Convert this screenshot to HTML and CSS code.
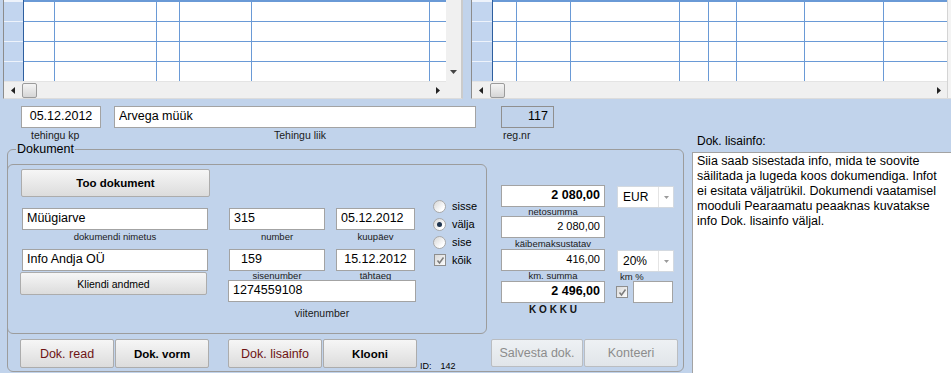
FILE: index.html
```html
<!DOCTYPE html>
<html lang="et">
<head>
    <meta charset="UTF-8">
    <meta name="viewport" content="width=device-width, initial-scale=1.0">
    <title>Dokument</title>
    <link rel="stylesheet" href="styles.css">
</head>
<body>
    <div class="grids">
        <div class="grid grid-left">
            <div class="grid-main">
                <div class="cells cols-left">
                    <div class="head"></div><div></div><div></div><div></div><div></div><div></div><div class="last"></div>
                </div>
                <div class="hscroll">
                    <span class="arrow"><svg width="4" height="7" viewBox="0 0 4 7"><path d="M4 0L0 3.5L4 7Z"/></svg></span>
                    <span class="thumb"></span>
                    <span class="arrow arrow-end"><svg width="4" height="7" viewBox="0 0 4 7"><path d="M0 0L4 3.5L0 7Z"/></svg></span>
                </div>
            </div>
            <div class="vscroll">
                <span class="arrow"><svg width="7" height="4" viewBox="0 0 7 4"><path d="M0 0H7L3.5 4Z"/></svg></span>
            </div>
        </div>

        <div class="grid grid-right">
            <div class="grid-main">
                <div class="cells cols-right">
                    <div class="head"></div><div></div><div></div><div></div><div></div><div></div><div></div><div></div><div class="last"></div>
                </div>
                <div class="hscroll">
                    <span class="arrow"><svg width="4" height="7" viewBox="0 0 4 7"><path d="M4 0L0 3.5L4 7Z"/></svg></span>
                    <span class="thumb"></span>
                    <span class="arrow arrow-end"><svg width="4" height="7" viewBox="0 0 4 7"><path d="M0 0L4 3.5L0 7Z"/></svg></span>
                </div>
            </div>
            <div class="stub"></div>
        </div>
    </div>

    <div class="content">
        <div class="form">
            <div class="head-row">
                <div class="field f-date">
                    <input class="box center" value="05.12.2012">
                    <span class="lbl-top">tehingu kp</span>
                </div>
                <div class="field f-kind">
                    <input class="box" value="Arvega müük">
                    <span class="lbl-top center">Tehingu liik</span>
                </div>
                <div class="field f-reg">
                    <input class="box box-ro right" value="117">
                    <span class="lbl-top">reg.nr</span>
                </div>
            </div>

            <fieldset class="doc">
                <legend>Dokument</legend>
                <div class="doc-row">
                    <div class="doc-box">
                        <div class="col-a">
                            <button class="btn btn-bold btn-fetch">Too dokument</button>
                            <div class="field f-name">
                                <input class="box" value="Müügiarve">
                                <span class="lbl">dokumendi nimetus</span>
                            </div>
                            <input class="box f-client" value="Info Andja OÜ">
                            <button class="btn btn-client">Kliendi andmed</button>
                        </div>

                        <div class="col-b">
                            <div class="pair">
                                <div class="field f-num">
                                    <input class="box" value="315">
                                    <span class="lbl">number</span>
                                </div>
                                <div class="field f-day">
                                    <input class="box" value="05.12.2012">
                                    <span class="lbl">kuupäev</span>
                                </div>
                            </div>
                            <div class="pair">
                                <div class="field f-num">
                                    <input class="box pad-num" value="159">
                                    <span class="lbl lbl-tight">sisenumber</span>
                                </div>
                                <div class="field f-day">
                                    <input class="box center" value="15.12.2012">
                                    <span class="lbl lbl-tight">tähtaeg</span>
                                </div>
                            </div>
                            <div class="field f-ref">
                                <input class="box" value="1274559108">
                                <span class="lbl lbl-ref">viitenumber</span>
                            </div>
                        </div>

                        <div class="col-c">
                            <label class="opt"><span class="radio"></span>sisse</label>
                            <label class="opt"><span class="radio on"></span>välja</label>
                            <label class="opt"><span class="radio"></span>sise</label>
                            <label class="opt"><span class="check"><svg width="9" height="9" viewBox="0 0 9 9"><path d="M1.5 4.5L3.5 7L7.5 1.5" fill="none" stroke="#7c7c7c" stroke-width="1.5"/></svg></span>kõik</label>
                        </div>
                    </div>

                    <div class="amounts">
                        <div class="amt-row">
                            <div class="field f-amt">
                                <input class="box right bold" value="2 080,00">
                                <span class="lbl lbl-9">netosumma</span>
                            </div>
                            <div class="combo">
                                <span>EUR</span>
                                <span class="drop"><svg width="5" height="3" viewBox="0 0 5 3"><path d="M0 0H5L2.5 3Z"/></svg></span>
                            </div>
                        </div>
                        <div class="field f-amt">
                            <input class="box right small" value="2 080,00">
                            <span class="lbl lbl-11">käibemaksustatav</span>
                        </div>
                        <div class="amt-row">
                            <div class="field f-amt">
                                <input class="box right small" value="416,00">
                                <span class="lbl lbl-9">km. summa</span>
                            </div>
                            <div class="field f-combo">
                                <div class="combo">
                                    <span>20%</span>
                                    <span class="drop"><svg width="5" height="3" viewBox="0 0 5 3"><path d="M0 0H5L2.5 3Z"/></svg></span>
                                </div>
                                <span class="lbl lbl-9">km %</span>
                            </div>
                        </div>
                        <div class="amt-row total-row">
                            <input class="box right bold f-amt" value="2 496,00">
                            <span class="check check-total"><svg width="9" height="9" viewBox="0 0 9 9"><path d="M1.5 4.5L3.5 7L7.5 1.5" fill="none" stroke="#7c7c7c" stroke-width="1.5"/></svg></span>
                            <input class="box f-extra" value="">
                        </div>
                        <div class="lbl-total">K O K K U</div>
                    </div>
                </div>

                <div class="actions">
                    <button class="btn btn-act btn-red">Dok. read</button>
                    <button class="btn btn-act btn-bold gap-s">Dok. vorm</button>
                    <button class="btn btn-act btn-red gap-l">Dok. lisainfo</button>
                    <button class="btn btn-act btn-bold gap-s">Klooni</button>
                    <span class="id">ID:<span class="id-num">142</span></span>
                    <button class="btn btn-save" disabled>Salvesta dok.</button>
                    <button class="btn btn-post" disabled>Konteeri</button>
                </div>
            </fieldset>
        </div>

        <div class="info">
            <div class="info-label">Dok. lisainfo:</div>
            <div class="info-text">
                Siia saab sisestada info, mida te soovite<br>
                säilitada ja lugeda koos dokumendiga. Infot<br>
                ei esitata väljatrükil. Dokumendi vaatamisel<br>
                mooduli Pearaamatu peaaknas kuvatakse<br>
                info Dok. lisainfo väljal.
            </div>
        </div>
    </div>
</body>
</html>
```

FILE: styles.css
```css
* {
    box-sizing: border-box;
}

body {
    margin: 0;
    width: 951px;
    height: 373px;
    overflow: hidden;
    background: #c1d3eb;
    font-family: 'Liberation Sans', Arial, sans-serif;
    font-size: 12.5px;
    color: #000;
}

/* top grids */
.grids {
    display: flex;
    height: 99px;
}

.grid {
    display: flex;
    height: 99px;
    background: #f0f0f0;
    border-left: 1px solid #8c8c8c;
    border-bottom: 1px solid #dcdcdc;
}

.grid-left {
    margin-left: 3px;
    width: 460px;
    border-right: 2px solid #cbcbcb;
}

.grid-right {
    margin-left: 8px;
    width: 480px;
}

.grid-main {
    display: flex;
    flex-direction: column;
    flex: 1;
}

.cells {
    display: grid;
    height: 81px;
    background: repeating-linear-gradient(to bottom, #6a9ad6 0, #6a9ad6 1px, #fff 1px, #fff 20px);
    background-position: 0 1px;
}

.cols-left {
    grid-template-columns: 20px 31px 102px 23px 72px 178px 16px;
}

.cols-right {
    grid-template-columns: 21px 24px 54px 109px 29px 28px 68px 79px 63px;
}

.cells > div {
    border-right: 1px solid #6a9ad6;
}

.cells > .head {
    border-right-color: #2e5f9f;
    background: repeating-linear-gradient(to bottom, #eef3fb 0, #eef3fb 1px, #c2d5ef 1px, #c2d5ef 20px);
    background-position: 0 1px;
}

.cells > .last {
    border-right: 0;
}

.hscroll {
    display: flex;
    align-items: center;
    height: 17px;
    border-top: 1px solid #e4e4e4;
}

.arrow {
    display: flex;
    align-items: center;
    justify-content: center;
    width: 17px;
    height: 16px;
}

.arrow path {
    fill: #222;
}

.arrow-end {
    margin-left: auto;
}

.thumb {
    margin-left: 1px;
    width: 15px;
    height: 15px;
    border: 1px solid #9b9b9b;
    border-radius: 2px;
    background: linear-gradient(#f4f4f4, #d6d6d6);
}

.vscroll {
    display: flex;
    flex-direction: column;
    justify-content: flex-end;
    width: 15px;
    padding-bottom: 18px;
}

.vscroll .arrow {
    width: 15px;
}

.vscroll .arrow path {
    fill: #444;
}

.stub {
    width: 4px;
    border-left: 1px solid #d4d4d4;
    background: #f4f4f4;
}

/* form */
.content {
    display: flex;
    height: 274px;
}

.form {
    width: 692px;
    flex: none;
}

.field {
    display: flex;
    flex-direction: column;
}

.box {
    display: block;
    width: 100%;
    height: 22px;
    margin: 0;
    padding: 0 4px 2px;
    border: 1px solid #a3a3a3;
    background: #fff;
    font: inherit;
    color: #000;
    outline: none;
}

.box-ro {
    background: transparent;
    border-color: #8f8f8f;
    padding-right: 5px;
}

.center {
    text-align: center;
}

.right {
    text-align: right;
}

.bold {
    font-weight: bold;
}

.small {
    font-size: 11px;
}

.head-row {
    display: flex;
    padding-top: 7px;
}

.lbl-top {
    font-size: 10.5px;
    line-height: 14px;
    color: #1a1a1a;
}

.f-date {
    margin-left: 21px;
    width: 80px;
}

.f-date .lbl-top {
    padding-left: 10px;
}

.f-kind {
    margin-left: 13px;
    width: 362px;
}

.f-kind .lbl-top {
    padding-left: 10px;
}

.f-reg {
    margin-left: 25px;
    width: 53px;
}

.f-reg .lbl-top {
    padding-left: 2px;
}

/* Dokument group */
.doc {
    margin: 0 0 0 7px;
    width: 677px;
    min-width: 0;
    padding: 0 0 3px;
    border: 1px solid #9c9c9c;
    border-radius: 6px;
}

.doc legend {
    margin-left: 8px;
    padding: 0 1px;
    font-size: 12.5px;
    line-height: 14px;
}

.doc-row {
    display: flex;
    align-items: flex-start;
}

.doc-box {
    display: flex;
    align-items: flex-start;
    margin: 8px 0 0 -1px;
    width: 480px;
    height: 170px;
    border: 1px solid #9c9c9c;
    border-radius: 6px;
}

.btn {
    height: 28px;
    padding: 0;
    border: 1px solid #acacac;
    border-radius: 2px;
    background: linear-gradient(#f6f6f6, #dcdcdc);
    font-family: inherit;
    font-size: 12.5px;
    color: #000;
}

.btn-bold {
    font-weight: bold;
    font-size: 11.5px;
}

.btn-red {
    color: #6e1414;
}

.btn:disabled {
    color: #8c8c8c;
    background: linear-gradient(#eef1f4, #e1e5e9);
    border-color: #babdc1;
}

.lbl {
    font-size: 9.5px;
    line-height: 13px;
    text-align: center;
    color: #1a1a1a;
}

.lbl-tight {
    height: 9px;
    line-height: 9px;
    overflow: hidden;
}

.lbl-9 {
    line-height: 9px;
    height: 9px;
    overflow: hidden;
}

.lbl-11 {
    line-height: 11px;
}

.col-a {
    display: flex;
    flex-direction: column;
    margin: 4px 0 0 13px;
    width: 189px;
}

.btn-fetch {
    width: 189px;
}

.f-name {
    margin: 11px 0 0 1px;
    width: 186px;
}

.f-client {
    margin: 6px 0 0 1px;
    width: 186px;
}

.btn-client {
    margin: 1px 0 0 -1px;
    width: 187px;
    height: 23px;
    font-size: 10.5px;
}

.col-b {
    margin: 43px 0 0 18px;
    width: 188px;
}

.pair {
    display: flex;
}

.pair + .pair {
    margin-top: 6px;
}

.f-num {
    margin-left: 1px;
    width: 96px;
}

.f-day {
    margin-left: 11px;
    width: 79px;
}

.pad-num {
    padding-left: 11px;
}

.f-ref {
    width: 188px;
}

.lbl-ref {
    margin-top: 4px;
    font-size: 10.5px;
    line-height: 14px;
}

.col-c {
    margin: 32px 0 0 17px;
}

.opt {
    display: flex;
    align-items: center;
    gap: 6px;
    height: 18px;
    font-size: 11px;
}

.radio {
    display: flex;
    align-items: center;
    justify-content: center;
    width: 13px;
    height: 13px;
    border: 1px solid #a9a9a9;
    border-radius: 50%;
    background: linear-gradient(135deg, #d6d6d6, #fff 75%);
}

.radio.on::after {
    content: "";
    width: 5px;
    height: 5px;
    border-radius: 50%;
    background: #1f3550;
}

.check {
    display: flex;
    align-items: center;
    justify-content: center;
    margin-left: 1px;
    width: 12px;
    height: 12px;
    border: 1px solid #8e8e8e;
    background: linear-gradient(135deg, #d9d9d9, #fbfbfb);
}

/* amounts */
.amounts {
    margin: 29px 0 0 14px;
    width: 173px;
}

.amt-row {
    display: flex;
    align-items: flex-start;
}

.f-amt {
    width: 104px;
}

.combo {
    display: flex;
    margin: 1px 0 0 12px;
    width: 57px;
    height: 22px;
    border: 1px solid #d3d9e0;
    background: #fff;
    font-size: 12px;
    line-height: 20px;
}

.combo span:first-child {
    padding-left: 5px;
}

.drop {
    display: flex;
    align-items: center;
    justify-content: center;
    margin-left: auto;
    width: 15px;
    border-left: 1px solid #e4e4e4;
}

.drop path {
    fill: #9a9a9a;
}

.f-combo {
    margin-left: 12px;
}

.f-combo .combo {
    margin-left: 0;
}

.f-combo .lbl {
    padding-left: 3px;
    text-align: left;
}

.total-row {
    align-items: center;
}

.check-total {
    margin-left: 11px;
}

.f-extra {
    margin-left: 5px;
    width: 40px;
}

.lbl-total {
    width: 104px;
    margin-top: 1px;
    text-align: center;
    font-size: 10px;
    font-weight: bold;
    line-height: 12px;
    color: #111;
}

/* buttons */
.actions {
    display: flex;
    align-items: flex-start;
    height: 29px;
    margin-top: 5px;
    padding: 0 5px 0 12px;
}

.btn-act {
    width: 94px;
    height: 29px;
}

.gap-s {
    margin-left: 1px;
}

.gap-l {
    margin-left: 19px;
}

.id {
    margin: 21px 0 0 3px;
    font-size: 9px;
    line-height: 12px;
}

.id-num {
    margin-left: 9px;
}

.btn-save {
    margin-left: auto;
    width: 92px;
}

.btn-post {
    margin-left: 1px;
    width: 94px;
}

/* side info */
.info {
    flex: 1;
    padding-top: 35px;
}

.info-label {
    padding-left: 5px;
    font-size: 12px;
    line-height: 14px;
}

.info-text {
    margin-top: 4px;
    height: 221px;
    padding: 1px 0 0 4px;
    border-top: 1px solid #a3a3a3;
    border-left: 1px solid #a3a3a3;
    background: #fff;
    line-height: 15px;
}
```
